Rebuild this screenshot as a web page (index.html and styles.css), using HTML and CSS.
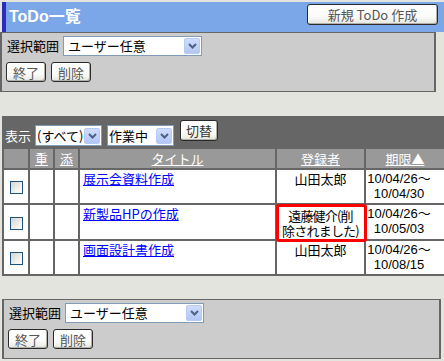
FILE: index.html
```html
<!DOCTYPE html>
<html lang="ja">
<head>
<meta charset="utf-8">
<title>ToDo一覧</title>
<link rel="stylesheet" href="styles.css">
</head>
<body>
<div class="top">
  <div class="titlebar">
    <h1 class="title">ToDo一覧</h1>
    <button class="btn btn-new">新規 ToDo 作成</button>
  </div>
  <div class="panel">
    <div class="row">
      <span class="label">選択範囲</span>
      <div class="select sel-user"><span class="sel-text">ユーザー任意</span><span class="sel-arrow"><svg width="9" height="6" viewBox="0 0 9 6"><path d="M1 1 L4.5 4.5 L8 1" fill="none" stroke="#4d6185" stroke-width="2"/></svg></span></div>
    </div>
    <div class="row buttons">
      <button class="btn btn-small">終了</button>
      <button class="btn btn-small">削除</button>
    </div>
  </div>
</div>

<div class="list">
  <div class="filterbar">
    <span class="bar-label">表示</span>
    <div class="select sel-small"><span class="sel-text">(すべて)</span><span class="sel-arrow"><svg width="9" height="6" viewBox="0 0 9 6"><path d="M1 1 L4.5 4.5 L8 1" fill="none" stroke="#4d6185" stroke-width="2"/></svg></span></div>
    <div class="select sel-small"><span class="sel-text">作業中</span><span class="sel-arrow"><svg width="9" height="6" viewBox="0 0 9 6"><path d="M1 1 L4.5 4.5 L8 1" fill="none" stroke="#4d6185" stroke-width="2"/></svg></span></div>
    <button class="btn btn-switch">切替</button>
  </div>
  <table class="todo">
    <thead>
      <tr>
        <th class="c1"></th>
        <th class="c2"><a href="#">重</a></th>
        <th class="c3"><a href="#">添</a></th>
        <th class="c4"><a href="#">タイトル</a></th>
        <th class="c5"><a href="#">登録者</a></th>
        <th class="c6"><a href="#">期限▲</a></th>
      </tr>
    </thead>
    <tbody>
      <tr>
        <td class="chk"><span class="checkbox"></span></td>
        <td></td>
        <td></td>
        <td class="ttl"><a href="#">展示会資料作成</a></td>
        <td class="who">山田太郎</td>
        <td class="date">10/04/26～<br>10/04/30</td>
      </tr>
      <tr>
        <td class="chk"><span class="checkbox"></span></td>
        <td></td>
        <td></td>
        <td class="ttl"><a href="#">新製品HPの作成</a></td>
        <td class="who flag">遠藤健介(削<br>除されました)</td>
        <td class="date">10/04/26～<br>10/05/03</td>
      </tr>
      <tr>
        <td class="chk"><span class="checkbox"></span></td>
        <td></td>
        <td></td>
        <td class="ttl"><a href="#">画面設計書作成</a></td>
        <td class="who">山田太郎</td>
        <td class="date">10/04/26～<br>10/08/15</td>
      </tr>
    </tbody>
  </table>
</div>

<div class="panel panel-bottom">
  <div class="row">
    <span class="label">選択範囲</span>
    <div class="select sel-user"><span class="sel-text">ユーザー任意</span><span class="sel-arrow"><svg width="9" height="6" viewBox="0 0 9 6"><path d="M1 1 L4.5 4.5 L8 1" fill="none" stroke="#4d6185" stroke-width="2"/></svg></span></div>
  </div>
  <div class="row buttons">
    <button class="btn btn-small">終了</button>
    <button class="btn btn-small">削除</button>
  </div>
</div>
</body>
</html>
```

FILE: styles.css
```css
html, body {
  margin: 0;
  padding: 0;
  background: #e4e4de;
  font-family: "Noto Sans CJK JP", "Liberation Sans", sans-serif;
  font-size: 13px;
  color: #000;
  overflow: hidden;
}

.top {
  width: 444px;
}

.titlebar {
  margin: 2px 0 0 2px;
  height: 30px;
  background: #7ba6e7;
  border-left: 4px solid #2b2bbf;
  display: flex;
  align-items: flex-start;
  justify-content: space-between;
}

.title {
  margin: 0;
  padding-left: 3px;
  font: bold 16px/30px "Liberation Sans", "Noto Sans CJK JP", sans-serif;
  color: #fff;
}

.btn {
  box-sizing: border-box;
  height: 20px;
  padding: 0 4px;
  border: 1px solid #2a2a2a;
  border-radius: 3px;
  background: linear-gradient(#ffffff 0%, #fbfbf9 60%, #e6e6e0 100%);
  box-shadow: inset -1px -1px 0 #b0b0a8, inset 1px 1px 0 #ffffff;
  font: 13px/17px "Noto Sans CJK JP", sans-serif;
  color: #555;
  cursor: pointer;
}

.btn-new {
  margin: 2px 6px 0 0;
  width: 131px;
  height: 21px;
}

.btn-small {
  width: 40px;
}

.panel {
  box-sizing: border-box;
  width: 436px;
  height: 60px;
  background: #cccccc;
  border: 2px solid #666;
  border-top-width: 1px;
  border-bottom-width: 1px;
  padding: 3px 0 0 4px;
}

.panel-bottom {
  width: 439px;
  margin: 23px 0 0 2px;
}

.row {
  display: flex;
  align-items: center;
}

.row.buttons {
  margin-top: 6px;
  gap: 5px;
}

.label {
  margin-left: 1px;
  width: 52px;
  line-height: 20px;
}

.select {
  box-sizing: border-box;
  height: 20px;
  background: #fff;
  border: 1px solid #7f9db9;
  display: flex;
  align-items: center;
  justify-content: space-between;
}

.sel-user {
  margin-left: 4px;
  width: 139px;
}

.sel-text {
  padding-left: 4px;
  line-height: 18px;
  white-space: nowrap;
}

.sel-arrow {
  box-sizing: border-box;
  width: 16px;
  height: 16px;
  margin-right: 1px;
  border: 1px solid #b7caf2;
  border-radius: 2px;
  background: linear-gradient(#cfdcfd, #b3c7f5);
  display: flex;
  align-items: center;
  justify-content: center;
}

.list {
  margin: 24px 0 0 2px;
  width: 442px;
}

.filterbar {
  box-sizing: border-box;
  height: 33px;
  background: #666666;
  display: flex;
  align-items: flex-end;
  padding: 0 0 3px 3px;
}

.bar-label {
  color: #fff;
  line-height: 21px;
  width: 26px;
}

.sel-small {
  width: 67px;
  height: 21px;
  margin-left: 4px;
}

.sel-small + .sel-small {
  margin-left: 5px;
}

.sel-small .sel-text {
  padding-left: 1px;
}

.btn-switch {
  align-self: flex-start;
  margin: 4px 0 0 6px;
  width: 38px;
  height: 21px;
  color: #333;
}

.todo {
  width: 442px;
  table-layout: fixed;
  border-collapse: separate;
  border-spacing: 0;
  border-left: 2px solid #666;
}

.todo th,
.todo td {
  box-sizing: border-box;
  border-right: 2px solid #666;
  border-bottom: 2px solid #666;
  padding: 1px 3px;
  line-height: 15px;
  font-weight: normal;
}

.todo th {
  height: 21px;
  background: #999999;
  text-align: center;
  padding: 1px 2px;
}

.todo th a {
  color: #fff;
  text-decoration: underline;
}

.todo .c1 { width: 26px; }
.todo .c2 { width: 25px; }
.todo .c3 { width: 25px; }
.todo .c4 { width: 197px; }
.todo .c5 { width: 89px; }
.todo .c6 { width: 78px; border-right: none; }

.todo td {
  background: #fff;
  vertical-align: top;
  height: 35px;
}

.todo td:last-child {
  border-right: none;
}

.todo td.chk {
  vertical-align: middle;
  text-align: center;
  padding: 0;
}

.checkbox {
  display: inline-block;
  box-sizing: border-box;
  width: 13px;
  height: 13px;
  border: 1px solid #1c5180;
  background: linear-gradient(135deg, #d6d6cf 0%, #f4f4f0 70%, #ffffff 100%);
  vertical-align: middle;
}

.todo td.ttl a {
  color: #0000ff;
  text-decoration: underline;
}

.todo td.who {
  text-align: center;
  padding-left: 0;
  padding-right: 0;
  white-space: nowrap;
}

.todo td.flag {
  letter-spacing: -0.8px;
  padding-top: 3px;
  outline: 3px solid #ff0000;
  outline-offset: -2px;
  border-radius: 2px;
}

.todo td.date {
  font-family: "Liberation Sans", "Noto Sans CJK JP", sans-serif;
  text-align: center;
  padding-right: 12px;
  padding-left: 0;
  white-space: nowrap;
}
```
